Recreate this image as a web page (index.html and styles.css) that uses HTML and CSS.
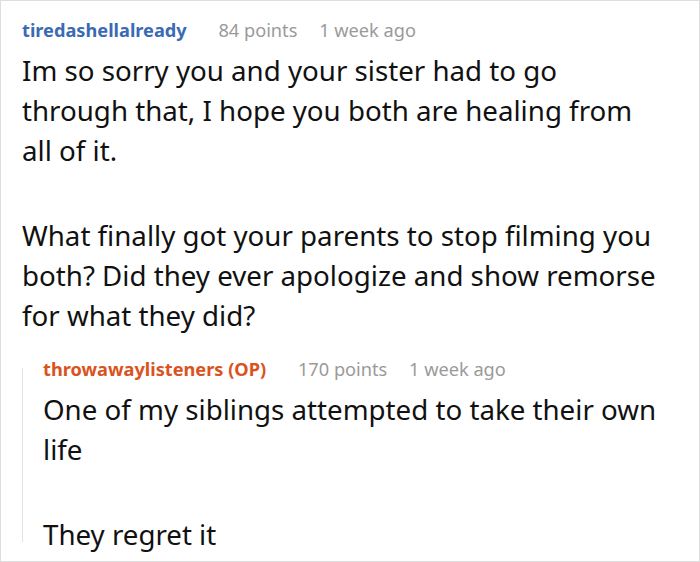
FILE: index.html
```html
<!DOCTYPE html>
<html>
<head>
<meta charset="utf-8">
<link rel="stylesheet" href="styles.css">
</head>
<body>
<div class="frame">
  <div class="comment">
    <div class="meta">
      <span class="user">tiredashellalready</span>
      <span class="points">84 points</span>
      <span class="time">1 week ago</span>
    </div>
    <div class="body">
      <p>Im so sorry you and your sister had to go through that, I hope you both are healing from all of it.</p>
      <p>What finally got your parents to stop filming you both? Did they ever apologize and show remorse for what they did?</p>
    </div>
    <div class="reply">
      <div class="meta">
        <span class="user op">throwawaylisteners (OP)</span>
        <span class="points">170 points</span>
        <span class="time">1 week ago</span>
      </div>
      <div class="body">
        <p>One of my siblings attempted to take their own life</p>
        <p>They regret it</p>
      </div>
    </div>
  </div>
</div>
</body>
</html>
```

FILE: styles.css
```css
html, body {
  margin: 0;
  padding: 0;
  background: #fff;
}
.frame {
  width: 700px;
  height: 562px;
  box-sizing: border-box;
  border: 1px solid #dedede;
  overflow: hidden;
  font-family: "Noto Sans", "Open Sans", sans-serif;
  color: #111;
}
.comment {
  padding: 17px 34px 0 21px;
}
.meta {
  font-size: 18.2px;
  line-height: 24px;
  color: #9a9a9a;
  white-space: nowrap;
}
.user {
  font-weight: bold;
  color: #3a6ab4;
}
.user.op {
  color: #d9531e;
}
.points {
  margin-left: 27px;
}
.time {
  margin-left: 17px;
}
.body {
  margin-top: 8px;
  font-size: 27.7px;
  line-height: 40px;
}
.body p {
  margin: 0 0 45px 0;
}
.body p:last-child {
  margin-bottom: 0;
}
.reply {
  position: relative;
  margin-top: 22px;
  padding-left: 21px;
}
.reply::before {
  content: "";
  position: absolute;
  left: 0;
  top: 11px;
  bottom: 12px;
  width: 1px;
  background: #e2e2e2;
}
```
